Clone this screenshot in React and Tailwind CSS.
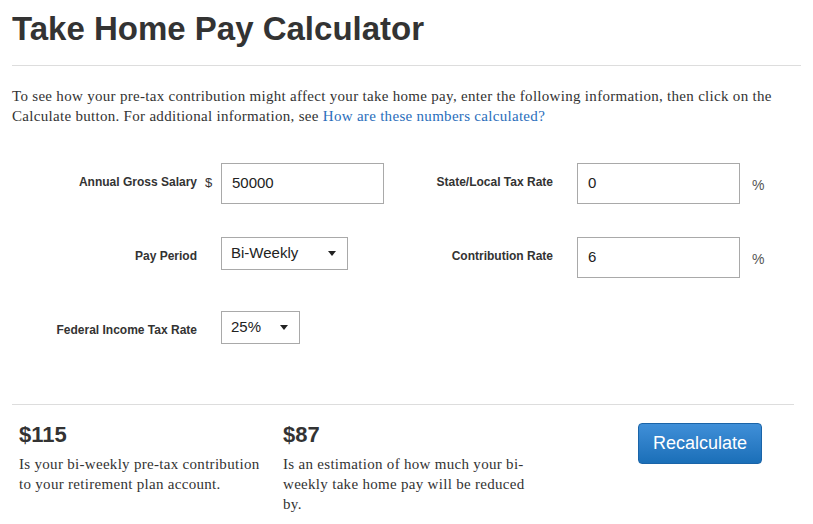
const sans = "font-['Liberation_Sans',Arial,sans-serif]";
const serif = "font-['Liberation_Serif','DejaVu_Serif',serif]";

function Field({ label, prefix, children, suffix, labelW }) {
  return (
    <div className="flex items-start h-[41px]">
      <div className={`${labelW} flex justify-end pr-[8px] pt-[12px]`}>
        <span className="text-[12px] leading-[14px] font-bold text-[#333]">{label}</span>
      </div>
      <div className="w-[16px] pt-[12px] text-[13px] leading-[16px] text-[#333]">{prefix}</div>
      {children}
      {suffix && <span className="ml-[12px] pt-[14px] text-[14px] leading-[16px] text-[#555]">{suffix}</span>}
    </div>
  );
}

function TextBox({ value }) {
  return (
    <div className="w-[163px] h-[41px] border border-[#a9a9a9] bg-white flex items-center px-[10px] text-[15px] text-[#222]">
      {value}
    </div>
  );
}

function Select({ value, w }) {
  return (
    <div className={`${w} h-[33px] border border-[#a9a9a9] bg-white flex items-center justify-between pl-[9px] pr-[11px] text-[15px] text-[#222]`}>
      <span>{value}</span>
      <svg width="8" height="5" viewBox="0 0 8 5"><path d="M0 0h8L4 5z" fill="#222" /></svg>
    </div>
  );
}

export default function App() {
  return (
    <div className={`${sans} bg-white w-[813px] h-[524px] overflow-hidden text-[#333]`}>
      <div className="px-[12px] pt-[9px]">
        <h1 className="text-[33px] font-bold leading-[40px] text-[#333]">Take Home Pay Calculator</h1>
        <div className="mt-[16px] border-t border-[#ddd] w-[789px]" />
        <p className={`${serif} mt-[20px] text-[15px] tracking-[0.3px] leading-[20px] text-[#333] w-[780px]`}>
          To see how your pre-tax contribution might affect your take home pay, enter the following information, then click on the Calculate button. For additional information, see{' '}
          <a className="text-[#2a6ebb]">How are these numbers calculated?</a>
        </p>
      </div>

      <div className="flex mt-[37px]">
        <div className="flex flex-col gap-[33px]">
          <Field label="Annual Gross Salary" prefix="$" labelW="w-[205px]">
            <TextBox value="50000" />
          </Field>
          <Field label="Pay Period" labelW="w-[205px]">
            <Select value="Bi-Weekly" w="w-[127px]" />
          </Field>
          <Field label="Federal Income Tax Rate" labelW="w-[205px]">
            <Select value="25%" w="w-[79px]" />
          </Field>
        </div>
        <div className="flex flex-col gap-[33px]">
          <Field label="State/Local Tax Rate" suffix="%" labelW="w-[177px]">
            <TextBox value="0" />
          </Field>
          <Field label="Contribution Rate" suffix="%" labelW="w-[177px]">
            <TextBox value="6" />
          </Field>
        </div>
      </div>

      <div className="mx-[12px] mt-[52px] border-t border-[#ddd] w-[782px]" />
      <div className="flex px-[19px] pt-[17px]">
        <div className="w-[264px]">
          <div className="text-[22px] font-bold leading-[26px] text-[#333]">$115</div>
          <p className={`${serif} mt-[6px] text-[15px] tracking-[0.3px] leading-[20px] text-[#333] w-[250px]`}>
            Is your bi-weekly pre-tax contribution to your retirement plan account.
          </p>
        </div>
        <div className="w-[250px]">
          <div className="text-[22px] font-bold leading-[26px] text-[#333]">$87</div>
          <p className={`${serif} mt-[6px] text-[15px] tracking-[0.3px] leading-[20px] text-[#333] w-[245px]`}>
            Is an estimation of how much your bi-weekly take home pay will be reduced by.
          </p>
        </div>
        <div className="ml-[105px] pt-[1px]">
          <button className="w-[124px] h-[41px] rounded-[4px] border border-[#1a64a8] bg-gradient-to-b from-[#3f8fd8] to-[#1a6fb8] text-white text-[18px]">
            Recalculate
          </button>
        </div>
      </div>
    </div>
  );
}
